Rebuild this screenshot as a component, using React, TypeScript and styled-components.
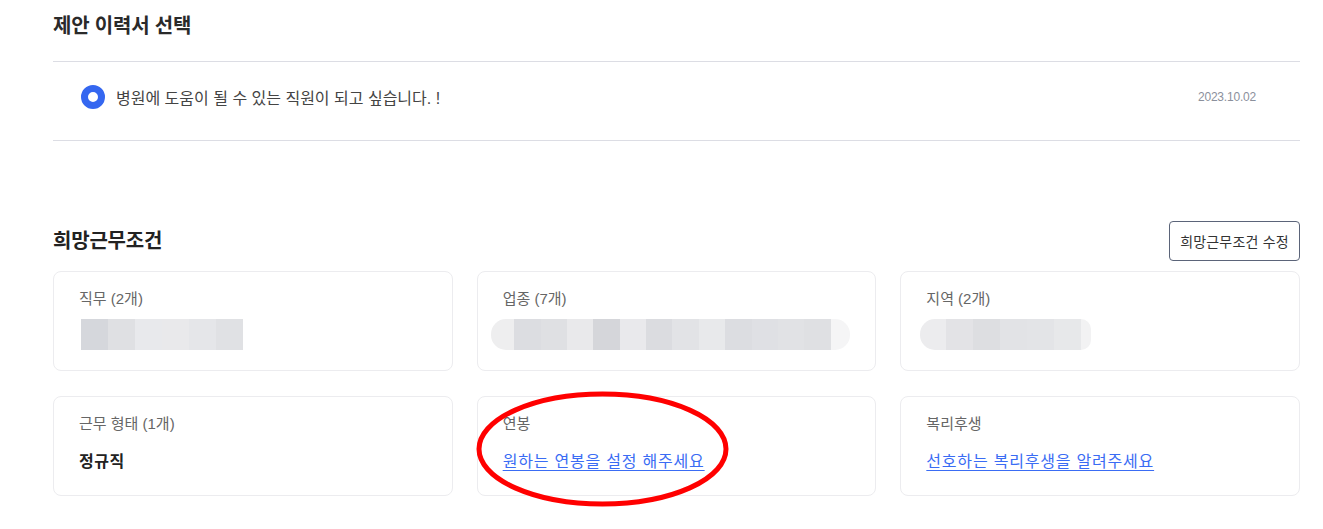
import React from "react";
import styled, { createGlobalStyle } from "styled-components";

const Global = createGlobalStyle`
  html, body { margin: 0; padding: 0; background: #fff; }
  body { font-family: "Liberation Sans", "Noto Sans CJK KR", sans-serif; color: #222; }
  * { box-sizing: border-box; }
`;

const Page = styled.div`
  width: 1323px;
  height: 529px;
  overflow: hidden;
  padding: 0 23px 0 53px;
`;

const SectionTitle = styled.h2`
  margin: 0;
  font-size: 20px;
  font-weight: 700;
  line-height: 28px;
  color: #222;
  letter-spacing: -0.2px;
`;

const TopTitle = styled(SectionTitle)`
  padding-top: 12px;
  height: 61px;
  color: #2a2a2a;
`;

const ResumeList = styled.div`
  border-top: 1px solid #dcdde4;
  border-bottom: 1px solid #dcdde4;
`;

const ResumeRow = styled.label`
  display: flex;
  align-items: center;
  height: 78px;
  padding: 0 44px 8px 28px;
`;

const Radio = styled.span`
  width: 24px;
  height: 24px;
  border-radius: 50%;
  border: 7.5px solid #3567f0;
  background: #fff;
  flex-shrink: 0;
`;

const ResumeText = styled.span`
  margin-left: 11px;
  font-size: 16px;
  color: #444;
  flex: 1;
  letter-spacing: 0px;
`;

const DateText = styled.span`
  font-size: 12px;
  color: #8b909c;
  letter-spacing: -0.2px;
`;

const Header = styled.div`
  display: flex;
  align-items: center;
  justify-content: space-between;
  margin-top: 80px;
  height: 40px;
`;

const EditButton = styled.button`
  height: 40px;
  width: 131px;
  padding: 0;
  border: 1px solid #5b6479;
  border-radius: 4px;
  background: #fff;
  font-family: inherit;
  font-size: 14px;
  color: #333;
  letter-spacing: 0.2px;
  cursor: pointer;
`;

const Grid = styled.div`
  display: grid;
  grid-template-columns: repeat(3, minmax(0, 1fr));
  gap: 25px 24px;
  margin-top: 10px;
`;

const Card = styled.div`
  position: relative;
  height: 100px;
  border: 1px solid #ececef;
  border-radius: 8px;
  padding: 17px 25px 0;
`;

const Label = styled.div`
  font-size: 15px;
  line-height: 20px;
  color: #666;
  letter-spacing: 0px;
`;

const Value = styled.div`
  margin-top: 17px;
  font-size: 16px;
  line-height: 22px;
  font-weight: 700;
  color: #222;
  letter-spacing: 0.5px;
`;

const Link = styled.a`
  display: inline-block;
  margin-top: 17px;
  font-size: 16px;
  line-height: 22px;
  color: #3a6cf4;
  text-decoration: underline;
  text-underline-offset: 3px;
  letter-spacing: 0.8px;
  cursor: pointer;
`;

const Blur = styled.div<{ $offset: number }>`
  display: flex;
  margin-top: 10px;
  margin-left: ${(p) => p.$offset}px;
  height: 31px;
  filter: blur(0.6px);
`;

const Block = styled.span<{ $c: string; $w: number; $round?: string }>`
  width: ${(p) => p.$w}px;
  height: 100%;
  background: ${(p) => p.$c};
  border-radius: ${(p) => p.$round || "0"};
`;

const Ellipse = styled.svg`
  position: absolute;
  left: -2px;
  top: -6px;
  width: 253px;
  height: 116px;
  overflow: visible;
  pointer-events: none;
`;

type B = { c: string; w: number; r?: string };

const blurA: B[] = [
  { c: "#d5d7dc", w: 27 },
  { c: "#dfe0e3", w: 27 },
  { c: "#e8e9ec", w: 27 },
  { c: "#e9e9eb", w: 27 },
  { c: "#e5e6e9", w: 27 },
  { c: "#e0e1e4", w: 27 },
];

const blurB: B[] = [
  { c: "#eeeeef", w: 24, r: "15px 0 0 15px" },
  { c: "#dcdde1", w: 27 },
  { c: "#dfe0e3", w: 27 },
  { c: "#e9e9eb", w: 27 },
  { c: "#d5d6da", w: 27 },
  { c: "#e9e9ec", w: 27 },
  { c: "#dbdce0", w: 27 },
  { c: "#e2e3e6", w: 27 },
  { c: "#e8e9eb", w: 27 },
  { c: "#dcdde1", w: 27 },
  { c: "#dfe0e4", w: 27 },
  { c: "#e1e2e5", w: 27 },
  { c: "#dfe0e3", w: 27 },
  { c: "#f5f5f6", w: 20, r: "0 15px 15px 0" },
];

const blurC: B[] = [
  { c: "#ececee", w: 26, r: "15px 0 0 15px" },
  { c: "#e3e3e6", w: 27 },
  { c: "#dddee1", w: 27 },
  { c: "#e2e3e6", w: 27 },
  { c: "#e3e4e7", w: 27 },
  { c: "#e7e8ea", w: 27 },
  { c: "#f2f2f3", w: 10, r: "0 15px 15px 0" },
];

const Blurred = ({ blocks, offset }: { blocks: B[]; offset: number }) => (
  <Blur $offset={offset}>
    {blocks.map((b, i) => (
      <Block key={i} $c={b.c} $w={b.w} $round={b.r} />
    ))}
  </Blur>
);

export default function App() {
  return (
    <>
      <Global />
      <Page>
        <TopTitle>제안 이력서 선택</TopTitle>
        <ResumeList>
          <ResumeRow>
            <Radio />
            <ResumeText>병원에 도움이 될 수 있는 직원이 되고 싶습니다. !</ResumeText>
            <DateText>2023.10.02</DateText>
          </ResumeRow>
        </ResumeList>

        <Header>
          <SectionTitle>희망근무조건</SectionTitle>
          <EditButton>희망근무조건 수정</EditButton>
        </Header>

        <Grid>
          <Card>
            <Label>직무 (2개)</Label>
            <Blurred blocks={blurA} offset={2} />
          </Card>
          <Card>
            <Label>업종 (7개)</Label>
            <Blurred blocks={blurB} offset={-12} />
          </Card>
          <Card>
            <Label>지역 (2개)</Label>
            <Blurred blocks={blurC} offset={-6} />
          </Card>
          <Card>
            <Label>근무 형태 (1개)</Label>
            <Value>정규직</Value>
          </Card>
          <Card>
            <Label>연봉</Label>
            <Link>원하는 연봉을 설정 해주세요</Link>
            <Ellipse viewBox="0 0 253 116">
              <ellipse cx="126.5" cy="58" rx="123.5" ry="55" fill="none" stroke="#f00" strokeWidth="5" />
            </Ellipse>
          </Card>
          <Card>
            <Label>복리후생</Label>
            <Link>선호하는 복리후생을 알려주세요</Link>
          </Card>
        </Grid>
      </Page>
    </>
  );
}
